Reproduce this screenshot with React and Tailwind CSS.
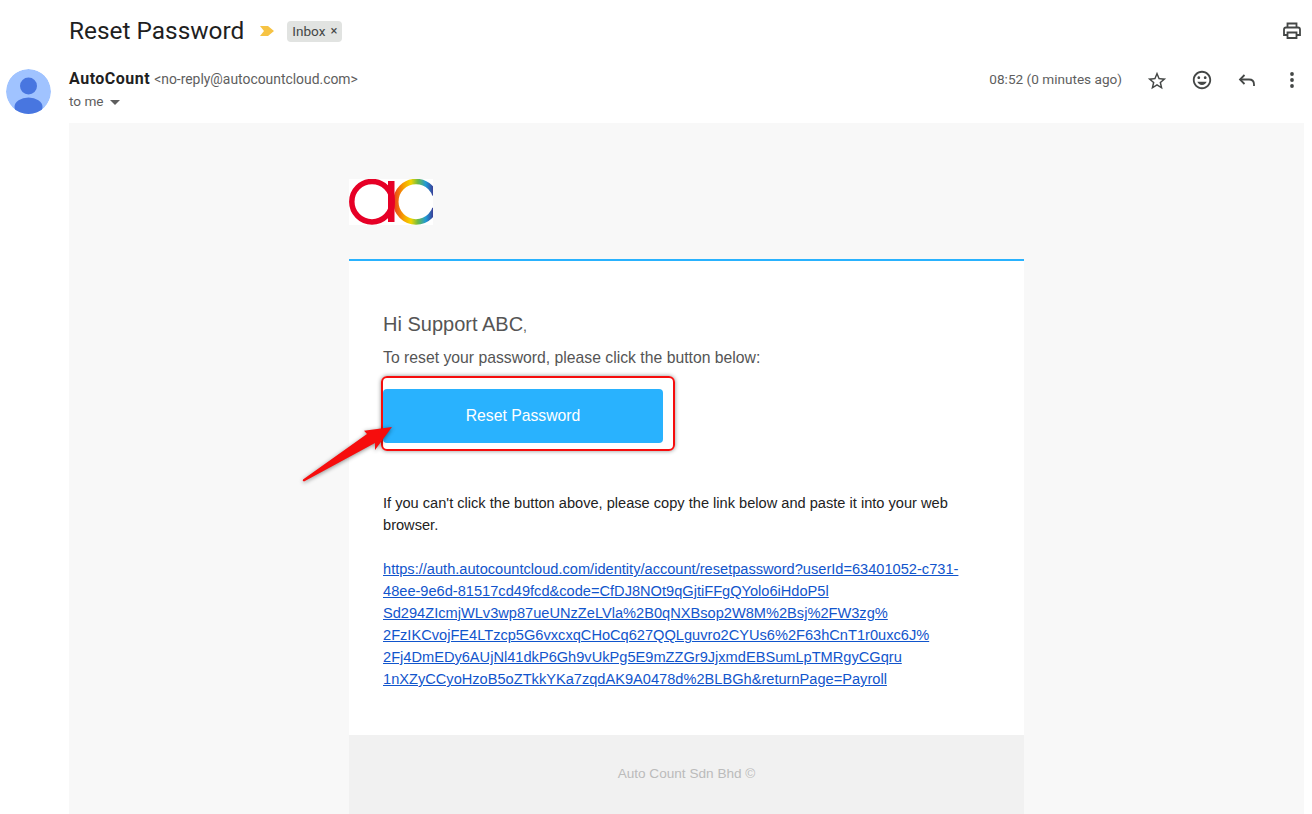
import { MdOutlineInsertEmoticon, MdStarBorder } from "react-icons/md";

const sans = "font-['Roboto',sans-serif]";
const arial = "font-['Liberation_Sans',Arial,sans-serif]";

const Logo = () => (
  <svg width="84" height="46" viewBox="0 0 84 46" className="block bg-white">
    <defs>
      <linearGradient id="rainbow" gradientUnits="userSpaceOnUse" x1="44" y1="23" x2="84" y2="23">
        <stop offset="0" stopColor="#e8391c" />
        <stop offset="0.28" stopColor="#f7a600" />
        <stop offset="0.45" stopColor="#f2d500" />
        <stop offset="0.62" stopColor="#6dbb45" />
        <stop offset="0.82" stopColor="#1f9ad6" />
        <stop offset="1" stopColor="#3a3f98" />
      </linearGradient>
    </defs>
    <circle cx="67" cy="22.7" r="20.2" fill="none" stroke="url(#rainbow)" strokeWidth="5.5" />
    <rect x="76" y="16.7" width="8" height="12" fill="#fff" />
    <circle cx="23" cy="22.7" r="20.2" fill="none" stroke="#e60026" strokeWidth="5.5" />
    <rect x="39" y="2" width="6.5" height="41" fill="#e60026" />
  </svg>
);

const Arrow = () => (
  <svg width="100" height="66" viewBox="0 0 100 66" className="absolute left-[300px] top-[420px] drop-shadow-[0_1px_2px_rgba(0,0,0,0.45)]">
    <path d="M3 59.5 L67 14 L64 10.7 L92 7 L75 30 L75 23 L4 61.5 Q2 61 3 59.5 Z" fill="#f60d0d" />
  </svg>
);

export default function App() {
  return (
    <div className={`relative w-[1312px] h-[814px] overflow-hidden bg-white ${sans}`}>
      <div className="flex items-center h-[62px] pl-[69px] pr-[10px]">
        <h1 className="text-[24.4px] leading-[30px] text-[#1f1f1f]">Reset Password</h1>
        <svg width="16" height="12" viewBox="0 0 16 12" className="ml-[15px]">
          <path d="M1 1 H9 L15 6 L9 11 H1 L5 6 Z" fill="#f6c344" />
        </svg>
        <span className="ml-[12px] flex items-center h-[21px] px-[5px] rounded-[4px] bg-[#e1e3e1] text-[13.6px] text-[#444746]">
          Inbox <span className="ml-[5px] text-[13px]">×</span>
        </span>
        <svg width="20" height="20" viewBox="0 0 20 20" fill="none" stroke="#444746" strokeWidth="1.8" className="ml-auto">
          <path d="M5.5 6 V2.5 H14.5 V6" />
          <path d="M5.5 14 H2 V8.5 Q2 6.5 4 6.5 H16 Q18 6.5 18 8.5 V14 H14.5" />
          <path d="M5.5 11.5 H14.5 V17 H5.5 Z" />
        </svg>
      </div>

      <div className="flex h-[61px]">
        <div className="w-[69px] pl-[6px] pt-[7px]">
          <svg width="45" height="45" viewBox="0 0 45 45" className="block rounded-full">
            <circle cx="22.5" cy="22.5" r="22.5" fill="#a0c3ff" />
            <circle cx="22.5" cy="17" r="8.5" fill="#4876e0" />
            <ellipse cx="22.5" cy="38" rx="14" ry="9.5" fill="#4876e0" />
          </svg>
        </div>
        <div className="flex-1 pt-[7px]">
          <div className="leading-[20px] text-[#1f1f1f]">
            <span className="text-[16px] font-bold tracking-[0.5px]">AutoCount</span>{" "}
            <span className="text-[13.9px] text-[#5e5e5e]">&lt;no-reply@autocountcloud.com&gt;</span>
          </div>
          <div className="flex items-center mt-[2px] text-[13.6px] leading-[20px] text-[#5e5e5e]">
            to me
            <span className="ml-[6px] mt-[2px] w-0 h-0 border-x-[5px] border-x-transparent border-t-[5px] border-t-[#5e5e5e]" />
          </div>
        </div>
        <div className="flex items-start pt-[7px] pr-[9px] text-[#444746]">
          <span className="text-[13.6px] leading-[20px] text-[#5e5e5e] mr-[24px]">08:52 (0 minutes ago)</span>
          <MdStarBorder className="w-[22px] h-[22px] mt-[1px] mr-[23px]" />
          <MdOutlineInsertEmoticon className="w-[22px] h-[22px] mr-[23px]" />
          <svg width="22" height="22" viewBox="0 0 22 22" fill="none" stroke="#444746" strokeWidth="1.8" className="mr-[23px]">
            <path d="M8.5 6 L4 10.5 L8.5 15" />
            <path d="M4 10.5 H13 Q18 10.5 18 15.5 V17" />
          </svg>
          <svg width="22" height="22" viewBox="0 0 22 22" fill="#444746">
            <circle cx="11" cy="5" r="1.9" />
            <circle cx="11" cy="11" r="1.9" />
            <circle cx="11" cy="17" r="1.9" />
          </svg>
        </div>
      </div>

      <div className={`ml-[69px] mr-[8px] h-[691px] bg-[#f8f8f8] ${arial}`}>
        <div className="w-[675px] ml-[280px]">
          <div className="pt-[56px] h-[136px]">
            <Logo />
          </div>
          <div className="h-[2px] bg-[#29b2fe]" />
          <div className="bg-white h-[474px] px-[34px] pt-[50px]">
            <p className="text-[20px] leading-[26px] text-[#555555]">Hi Support ABC<span className="text-[14px]">,</span></p>
            <p className="mt-[8px] text-[15.75px] leading-[22px] text-[#555555]">To reset your password, please click the button below:</p>
            <div className="mt-[20px] flex items-center justify-center w-[280px] h-[54px] rounded-[4px] bg-[#29b2fe] text-white text-[15.75px]">
              Reset Password
            </div>
            <p className="mt-[49px] text-[14.62px] leading-[22px] text-[#222222]">
              If you can't click the button above, please copy the link below and paste it into your web browser.
            </p>
            <a className="block mt-[22px] text-[14.62px] leading-[22px] text-[#1155cc] underline">
              https://auth.autocountcloud.com/identity/account/resetpassword?userId=63401052-c731-<br />
              48ee-9e6d-81517cd49fcd&amp;code=CfDJ8NOt9qGjtiFFgQYolo6iHdoP5l<br />
              Sd294ZIcmjWLv3wp87ueUNzZeLVla%2B0qNXBsop2W8M%2Bsj%2FW3zg%<br />
              2FzIKCvojFE4LTzcp5G6vxcxqCHoCq627QQLguvro2CYUs6%2F63hCnT1r0uxc6J%<br />
              2Fj4DmEDy6AUjNl41dkP6Gh9vUkPg5E9mZZGr9JjxmdEBSumLpTMRgyCGqru<br />
              1nXZyCCyoHzoB5oZTkkYKa7zqdAK9A0478d%2BLBGh&amp;returnPage=Payroll
            </a>
          </div>
          <div className="h-[79px] bg-[#f1f1f1] pt-[29px] text-center text-[13.6px] leading-[20px] text-[#bbbbbb]">
            Auto Count Sdn Bhd ©
          </div>
        </div>
      </div>

      <div className="absolute left-[381px] top-[376px] w-[294px] h-[75px] rounded-[6px] border-2 border-[#f60d0d] shadow-[0_0_4px_rgba(0,0,0,0.45)]" />
      <Arrow />
    </div>
  );
}
